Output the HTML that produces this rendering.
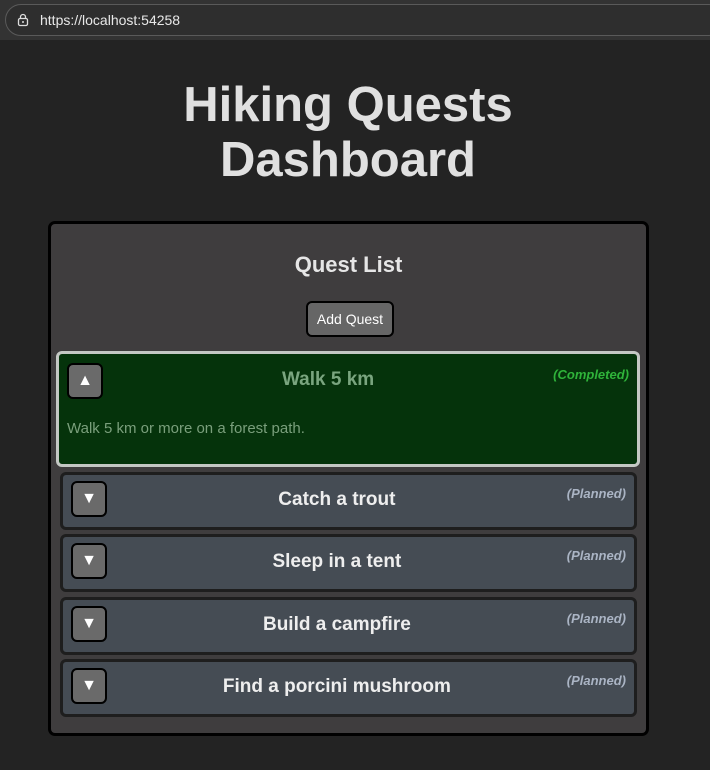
<!DOCTYPE html>
<html><head><meta charset="utf-8"><style>
*{box-sizing:border-box;margin:0;padding:0}
body{width:710px;height:770px;background:#232323;font-family:"Liberation Sans","DejaVu Sans",sans-serif;position:relative;overflow:hidden}
.bar{position:absolute;left:0;top:0;width:710px;height:40px;background:#333}
.url{position:absolute;left:5px;top:4px;width:720px;height:32px;border:1px solid #5a5a5a;border-radius:16px;background:#2e2e2e}
.url span{position:absolute;left:34px;top:7px;color:#e8e8e8;font-size:14px}
h1{position:absolute;left:0;top:78px;width:696px;text-align:center;color:#e0e0e0;font-size:49px;line-height:55px;font-weight:bold}
.panel{position:absolute;left:48px;top:221px;width:601px;height:515px;background:#3f3d3e;border:3px solid #000;border-radius:7px}
.pt{position:absolute;left:0;width:595px;top:28px;text-align:center;color:#e6e6e6;font-size:22px;font-weight:bold}
.add{position:absolute;left:255px;top:77px;width:88px;height:36px;background:#666;border:2px solid #000;border-radius:6px;color:#fff;font-size:14px;text-align:center;line-height:32px}
.card{position:absolute;border-radius:6px}
.row{position:absolute;left:8px;right:8px;display:flex;align-items:flex-start}
.tg{flex:none;width:36px;height:36px;background:#6a6a6a;border:2px solid #000;border-radius:6px;color:#fff;font-size:16px;text-align:center;line-height:32px}
.ct{flex:1;text-align:center;font-weight:bold;font-size:19px;padding-top:6px}
.p .ct{padding-top:8px}
.st{flex:none;font-style:italic;font-weight:bold;font-size:13px;padding-top:4px}
.p .st{padding-top:5px}
</style></head><body>
<div class="bar"><div class="url"><svg style="position:absolute;left:10px;top:8px" width="14" height="14" viewBox="0 0 14 14"><rect x="2.5" y="5.5" width="9" height="7" rx="1.5" fill="none" stroke="#ddd" stroke-width="1.3"/><path d="M4.5 5.5V4a2.5 2.5 0 0 1 5 0v1.5" fill="none" stroke="#ddd" stroke-width="1.3"/><circle cx="7" cy="9" r="1" fill="#ddd"/></svg><span>https://localhost:54258</span></div></div>
<h1>Hiking Quests<br>Dashboard</h1>
<div class="panel">
<div class="pt">Quest List</div>
<div class="add">Add Quest</div>
<div class="card" style="left:5px;top:127px;width:584px;height:116px;background:#05330b;border:3px solid #c4c8c4">
<div class="row" style="top:9px"><div class="tg">▲</div><div class="ct" style="color:#7aa57f">Walk 5 km</div><div class="st" style="color:#2fb33a">(Completed)</div></div>
<div style="position:absolute;left:8px;top:66px;color:#7a9f7c;font-size:15px">Walk 5 km or more on a forest path.</div>
</div>
<div class="card p" style="left:9px;top:248px;width:577px;height:58px;background:#454c54;border:3px solid #1e1e1e"><div class="row" style="top:6px"><div class="tg">▼</div><div class="ct" style="color:#eee">Catch a trout</div><div class="st" style="color:#aab4c4">(Planned)</div></div></div>
<div class="card p" style="left:9px;top:310px;width:577px;height:58px;background:#454c54;border:3px solid #1e1e1e"><div class="row" style="top:6px"><div class="tg">▼</div><div class="ct" style="color:#eee">Sleep in a tent</div><div class="st" style="color:#aab4c4">(Planned)</div></div></div>
<div class="card p" style="left:9px;top:373px;width:577px;height:58px;background:#454c54;border:3px solid #1e1e1e"><div class="row" style="top:6px"><div class="tg">▼</div><div class="ct" style="color:#eee">Build a campfire</div><div class="st" style="color:#aab4c4">(Planned)</div></div></div>
<div class="card p" style="left:9px;top:435px;width:577px;height:58px;background:#454c54;border:3px solid #1e1e1e"><div class="row" style="top:6px"><div class="tg">▼</div><div class="ct" style="color:#eee">Find a porcini mushroom</div><div class="st" style="color:#aab4c4">(Planned)</div></div></div>
</div>
</body></html>
